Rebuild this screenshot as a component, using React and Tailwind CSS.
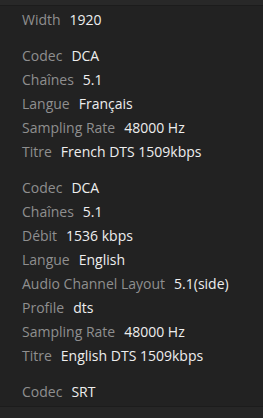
import React from "react";

const groups = [
    [["Width", "1920"]],
    [
        ["Codec", "DCA"],
        ["Chaînes", "5.1"],
        ["Langue", "Français"],
        ["Sampling Rate", "48000 Hz"],
        ["Titre", "French DTS 1509kbps"],
    ],
    [
        ["Codec", "DCA"],
        ["Chaînes", "5.1"],
        ["Débit", "1536 kbps"],
        ["Langue", "English"],
        ["Audio Channel Layout", "5.1(side)"],
        ["Profile", "dts"],
        ["Sampling Rate", "48000 Hz"],
        ["Titre", "English DTS 1509kbps"],
    ],
    [["Codec", "SRT"]],
];

export default function App() {
    return (
        <div className="w-[263px] h-[418px] bg-[#222222] flex flex-col overflow-hidden font-['Open_Sans',sans-serif] text-[14px]">
            <div className="h-[6px] bg-[#282828] border-b border-[#1c1c1c]" />
            <div className="flex-1 px-[22px] pt-px flex flex-col gap-3">
                {groups.map((rows, gi) => (
                    <div key={gi} className="flex flex-col">
                        {rows.map(([label, value], ri) => (
                            <div key={ri} className="h-6 flex items-center whitespace-nowrap">
                                <span className="text-[#8f8f8f]">{label}</span>
                                <span className="ml-[9px] text-[#eeeeee]">{value}</span>
                            </div>
                        ))}
                    </div>
                ))}
            </div>
            <div className="h-[12px] bg-[#262626] border-t border-[#1c1c1c]" />
        </div>
    );
}
